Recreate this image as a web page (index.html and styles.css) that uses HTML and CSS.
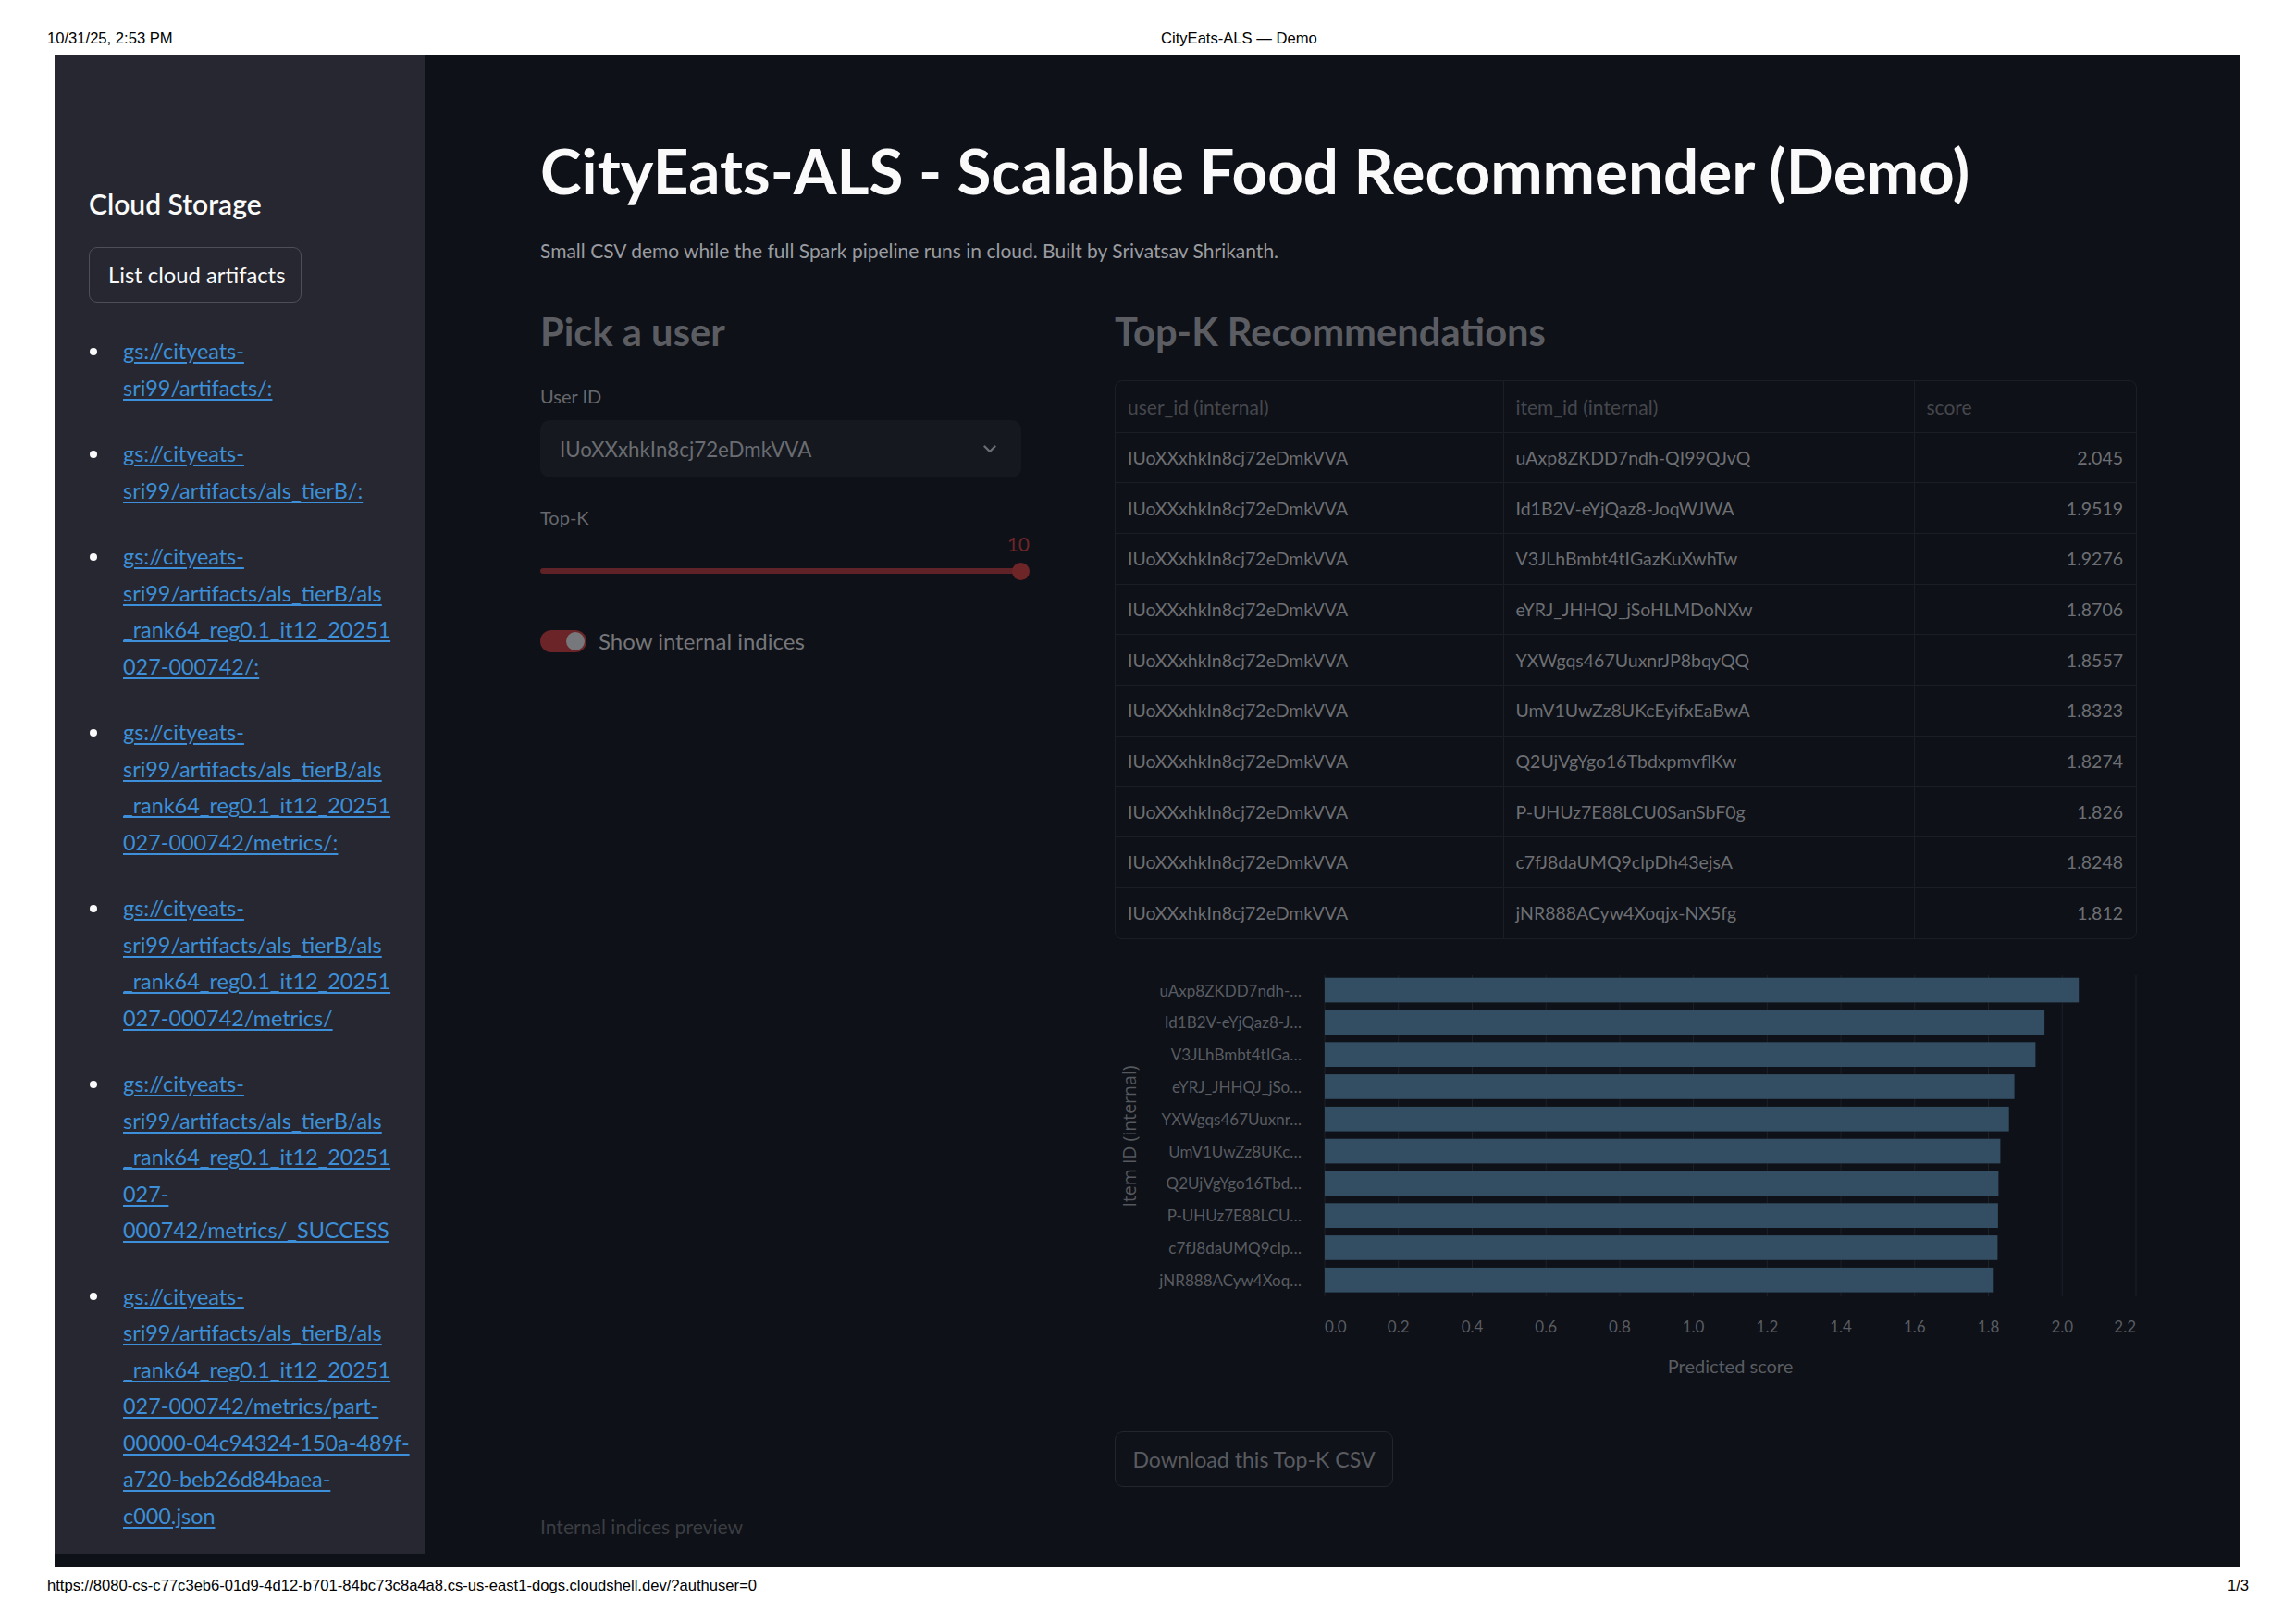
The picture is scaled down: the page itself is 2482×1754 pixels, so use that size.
FILE: index.html
```html
<!DOCTYPE html>
<html lang="en">
<head>
<meta charset="utf-8">
<title>CityEats-ALS — Demo</title>
<link rel="stylesheet" href="styles.css">
</head>
<body>
<header class="print-head">
  <span class="ph-date">10/31/25, 2:53 PM</span>
  <span class="ph-title">CityEats-ALS — Demo</span>
</header>

<div class="app">
  <aside class="sidebar">
    <h2 class="sb-title">Cloud Storage</h2>
    <button class="sb-button">List cloud artifacts</button>
    <ul class="sb-list">
      <li><a href="#">gs://cityeats-<br>sri99/artifacts/:</a></li>
      <li><a href="#">gs://cityeats-<br>sri99/artifacts/als_tierB/:</a></li>
      <li><a href="#">gs://cityeats-<br>sri99/artifacts/als_tierB/als<br>_rank64_reg0.1_it12_20251<br>027-000742/:</a></li>
      <li><a href="#">gs://cityeats-<br>sri99/artifacts/als_tierB/als<br>_rank64_reg0.1_it12_20251<br>027-000742/metrics/:</a></li>
      <li><a href="#">gs://cityeats-<br>sri99/artifacts/als_tierB/als<br>_rank64_reg0.1_it12_20251<br>027-000742/metrics/</a></li>
      <li><a href="#">gs://cityeats-<br>sri99/artifacts/als_tierB/als<br>_rank64_reg0.1_it12_20251<br>027-<br>000742/metrics/_SUCCESS</a></li>
      <li><a href="#">gs://cityeats-<br>sri99/artifacts/als_tierB/als<br>_rank64_reg0.1_it12_20251<br>027-000742/metrics/part-<br>00000-04c94324-150a-489f-<br>a720-beb26d84baea-<br>c000.json</a></li>
    </ul>
  </aside>

  <main class="main">
    <h1 class="title">CityEats-ALS - Scalable Food Recommender (Demo)</h1>
    <p class="caption">Small CSV demo while the full Spark pipeline runs in cloud. Built by Srivatsav Shrikanth.</p>

    <div class="columns">
      <section class="col-left">
        <h3 class="sec-title">Pick a user</h3>
        <label class="field-label label-user">User ID</label>
        <div class="select">
          <span class="select-value">IUoXXxhkIn8cj72eDmkVVA</span>
          <svg class="chevron" width="14" height="9" viewBox="0 0 14 9"><polyline points="1.5,1.5 7,7 12.5,1.5" fill="none" stroke="#6a6c71" stroke-width="2.4" stroke-linecap="round" stroke-linejoin="round"/></svg>
        </div>
        <label class="field-label label-topk">Top-K</label>
        <div class="slider">
          <div class="slider-value">10</div>
          <div class="slider-track"><span class="slider-thumb"></span></div>
        </div>
        <div class="toggle-row">
          <span class="toggle"><span class="toggle-knob"></span></span>
          <span class="toggle-label">Show internal indices</span>
        </div>
      </section>

      <section class="col-right">
        <h3 class="sec-title">Top-K Recommendations</h3>
        <div class="table-wrap">
          <table class="rec-table">
            <colgroup><col class="c1"><col class="c2"><col class="c3"></colgroup>
            <thead>
              <tr><th>user_id (internal)</th><th>item_id (internal)</th><th>score</th></tr>
            </thead>
            <tbody>
              <tr><td>IUoXXxhkIn8cj72eDmkVVA</td><td>uAxp8ZKDD7ndh-QI99QJvQ</td><td class="num">2.045</td></tr>
              <tr><td>IUoXXxhkIn8cj72eDmkVVA</td><td>Id1B2V-eYjQaz8-JoqWJWA</td><td class="num">1.9519</td></tr>
              <tr><td>IUoXXxhkIn8cj72eDmkVVA</td><td>V3JLhBmbt4tIGazKuXwhTw</td><td class="num">1.9276</td></tr>
              <tr><td>IUoXXxhkIn8cj72eDmkVVA</td><td>eYRJ_JHHQJ_jSoHLMDoNXw</td><td class="num">1.8706</td></tr>
              <tr><td>IUoXXxhkIn8cj72eDmkVVA</td><td>YXWgqs467UuxnrJP8bqyQQ</td><td class="num">1.8557</td></tr>
              <tr><td>IUoXXxhkIn8cj72eDmkVVA</td><td>UmV1UwZz8UKcEyifxEaBwA</td><td class="num">1.8323</td></tr>
              <tr><td>IUoXXxhkIn8cj72eDmkVVA</td><td>Q2UjVgYgo16TbdxpmvflKw</td><td class="num">1.8274</td></tr>
              <tr><td>IUoXXxhkIn8cj72eDmkVVA</td><td>P-UHUz7E88LCU0SanSbF0g</td><td class="num">1.826</td></tr>
              <tr><td>IUoXXxhkIn8cj72eDmkVVA</td><td>c7fJ8daUMQ9clpDh43ejsA</td><td class="num">1.8248</td></tr>
              <tr><td>IUoXXxhkIn8cj72eDmkVVA</td><td>jNR888ACyw4Xoqjx-NX5fg</td><td class="num">1.812</td></tr>
            </tbody>
          </table>
        </div>

        <svg class="chart" width="1105" height="460" viewBox="0 0 1105 460">
          <g class="grid">
            <line x1="227" y1="13" x2="227" y2="360"/>
            <line x1="306.7" y1="13" x2="306.7" y2="360"/>
            <line x1="386.5" y1="13" x2="386.5" y2="360"/>
            <line x1="466.2" y1="13" x2="466.2" y2="360"/>
            <line x1="545.9" y1="13" x2="545.9" y2="360"/>
            <line x1="625.6" y1="13" x2="625.6" y2="360"/>
            <line x1="705.4" y1="13" x2="705.4" y2="360"/>
            <line x1="785.1" y1="13" x2="785.1" y2="360"/>
            <line x1="864.8" y1="13" x2="864.8" y2="360"/>
            <line x1="944.5" y1="13" x2="944.5" y2="360"/>
            <line x1="1024.3" y1="13" x2="1024.3" y2="360"/>
            <line x1="1104" y1="13" x2="1104" y2="360"/>
          </g>
          <g class="bars">
            <rect x="227" y="15.7" width="815.2" height="26.7"/>
            <rect x="227" y="50.5" width="778.1" height="26.7"/>
            <rect x="227" y="85.3" width="768.4" height="26.7"/>
            <rect x="227" y="120.1" width="745.6" height="26.7"/>
            <rect x="227" y="154.9" width="739.7" height="26.7"/>
            <rect x="227" y="189.7" width="730.4" height="26.7"/>
            <rect x="227" y="224.5" width="728.4" height="26.7"/>
            <rect x="227" y="259.3" width="727.9" height="26.7"/>
            <rect x="227" y="294.1" width="727.4" height="26.7"/>
            <rect x="227" y="328.9" width="722.3" height="26.7"/>
          </g>
          <g class="ylabels">
            <text x="202" y="29">uAxp8ZKDD7ndh-…</text>
            <text x="202" y="63.8">Id1B2V-eYjQaz8-J…</text>
            <text x="202" y="98.6">V3JLhBmbt4tIGa…</text>
            <text x="202" y="133.4">eYRJ_JHHQJ_jSo…</text>
            <text x="202" y="168.2">YXWgqs467Uuxnr…</text>
            <text x="202" y="203">UmV1UwZz8UKc…</text>
            <text x="202" y="237.8">Q2UjVgYgo16Tbd…</text>
            <text x="202" y="272.6">P-UHUz7E88LCU…</text>
            <text x="202" y="307.4">c7fJ8daUMQ9clp…</text>
            <text x="202" y="342.2">jNR888ACyw4Xoq…</text>
          </g>
          <g class="xticks">
            <text x="227" y="392" class="first">0.0</text>
            <text x="306.7" y="392">0.2</text>
            <text x="386.5" y="392">0.4</text>
            <text x="466.2" y="392">0.6</text>
            <text x="545.9" y="392">0.8</text>
            <text x="625.6" y="392">1.0</text>
            <text x="705.4" y="392">1.2</text>
            <text x="785.1" y="392">1.4</text>
            <text x="864.8" y="392">1.6</text>
            <text x="944.5" y="392">1.8</text>
            <text x="1024.3" y="392">2.0</text>
            <text x="1104" y="392" class="last">2.2</text>
          </g>
          <text class="xtitle" x="665.5" y="443">Predicted score</text>
          <text class="ytitle" x="0" y="0" transform="translate(15 187) rotate(-90)">Item ID (internal)</text>
        </svg>

        <button class="dl-button">Download this Top-K CSV</button>
      </section>
    </div>

    <p class="preview-note">Internal indices preview</p>
  </main>
</div>

<footer class="print-foot">
  <span>https://8080-cs-c77c3eb6-01d9-4d12-b701-84bc73c8a4a8.cs-us-east1-dogs.cloudshell.dev/?authuser=0</span>
  <span>1/3</span>
</footer>
</body>
</html>
```

FILE: styles.css
```css
* { box-sizing: border-box; }

html, body {
  margin: 0;
  padding: 0;
  background: #ffffff;
}

body {
  width: 2482px;
  height: 1754px;
  overflow: hidden;
  font-family: "Lato", "Noto Sans", sans-serif;
}

/* print header / footer */
.print-head {
  height: 59px;
  padding: 33px 0 0 51px;
  display: grid;
  grid-template-columns: 1204px auto;
  font-family: "Liberation Sans", Arial, sans-serif;
  font-size: 16.6px;
  line-height: 18px;
  color: #000;
}

.print-foot {
  margin-top: 11px;
  padding: 0 51px;
  width: 2482px;
  display: flex;
  justify-content: space-between;
  font-family: "Liberation Sans", Arial, sans-serif;
  font-size: 16.6px;
  line-height: 18px;
  color: #000;
}

/* app frame */
.app {
  margin-left: 59px;
  width: 2363px;
  height: 1635px;
  background: #0e1117;
  display: flex;
  align-items: flex-start;
}

.sidebar {
  width: 400px;
  height: 1620px;
  flex: 0 0 400px;
  background: #262730;
  padding: 143px 37px 0 37px;
}

.sb-title {
  margin: 0;
  font-size: 30px;
  line-height: 1.2;
  font-weight: 600;
  color: #fafafa;
}

.sb-button {
  margin-top: 29px;
  width: 230px;
  height: 60px;
  padding: 0 0 0 20px;
  text-align: left;
  background: transparent;
  border: 1px solid #4d4e58;
  border-radius: 9px;
  color: #fafafa;
  font-family: "Lato", sans-serif;
  font-size: 23.8px;
}

.sb-list {
  list-style: none;
  margin: 33px 0 0 0;
  padding: 0;
}

.sb-list li {
  display: flex;
  margin-bottom: 32px;
  font-size: 23.4px;
  line-height: 39.5px;
  white-space: nowrap;
}

.sb-list li::before {
  content: "";
  flex: 0 0 8px;
  height: 8px;
  margin: 15.75px 28px 0 1px;
  border-radius: 50%;
  background: #fafafa;
}

.sb-list a {
  color: #3c8fd8;
  text-decoration: underline;
  text-underline-offset: 3px;
}

/* main */
.main {
  flex: 1;
  padding: 85px 0 0 125px;
}

.title {
  margin: 0;
  font-size: 67.4px;
  line-height: 1.2;
  font-weight: 700;
  color: #fafafa;
}

.caption {
  margin: 33px 0 0 0;
  font-size: 21px;
  line-height: 1.2;
  color: #9a9ca1;
}

.columns {
  margin-top: 50px;
  display: grid;
  grid-template-columns: 519px 1105px;
  column-gap: 102px;
  align-items: start;
}

.sec-title {
  margin: 0;
  font-size: 41.7px;
  line-height: 1.2;
  font-weight: 700;
  color: #5b5d62;
}

.field-label {
  display: block;
  font-size: 20px;
  line-height: 1.2;
  color: #67686d;
}

.label-user { margin-top: 33px; }
.label-topk { margin-top: 31px; }

.select {
  margin-top: 14px;
  height: 62px;
  width: 520px;
  background: #15181f;
  border-radius: 10px;
  padding: 0 27px 0 21px;
  display: flex;
  align-items: center;
  justify-content: space-between;
}

.select-value {
  font-size: 22.3px;
  color: #6a6c71;
}

.slider {
  margin-top: 4px;
}

.slider-value {
  text-align: right;
  margin-right: -10px;
  font-size: 21px;
  line-height: 1.2;
  color: #6e2528;
}

.slider-track {
  margin-top: 14px;
  height: 6px;
  border-radius: 3px;
  background: #5f2226;
  display: flex;
  justify-content: flex-end;
  align-items: center;
}

.slider-thumb {
  width: 19px;
  height: 19px;
  margin-right: -9.5px;
  border-radius: 50%;
  background: #6e2528;
}

.toggle-row {
  margin-top: 58px;
  display: flex;
  align-items: center;
  gap: 13px;
}

.toggle {
  width: 50px;
  height: 24px;
  border-radius: 12px;
  background: #6b2428;
  padding: 2px;
  display: flex;
  justify-content: flex-end;
  align-items: center;
}

.toggle-knob {
  width: 20px;
  height: 20px;
  border-radius: 50%;
  background: #77787c;
}

.toggle-label {
  font-size: 24px;
  color: #75767b;
}

/* table */
.table-wrap {
  margin-top: 28px;
  border: 1px solid #1b1e25;
  border-radius: 8px;
  overflow: hidden;
}

.rec-table {
  width: 100%;
  border-collapse: collapse;
  table-layout: fixed;
  font-size: 19.5px;
  color: #6d6f74;
}

.rec-table .c1 { width: 419px; }
.rec-table .c2 { width: 444px; }
.rec-table .c3 { width: auto; }

.rec-table th {
  height: 55px;
  padding: 0 13px;
  text-align: left;
  font-weight: 400;
  font-size: 21px;
  color: #45474d;
  border-bottom: 1px solid #1b1e25;
  border-right: 1px solid #1b1e25;
}

.rec-table td {
  height: 54.7px;
  padding: 0 13px;
  border-bottom: 1px solid #1b1e25;
  border-right: 1px solid #1b1e25;
  white-space: nowrap;
}

.rec-table tr > :last-child { border-right: none; }
.rec-table tbody tr:last-child td { border-bottom: none; }

.rec-table td.num {
  text-align: right;
  padding-right: 14px;
}

/* chart */
.chart {
  display: block;
  margin-top: 26px;
}

.chart .grid line {
  stroke: #1c2029;
  stroke-width: 1;
}

.chart .bars rect {
  fill: #334d63;
}

.chart .ylabels text {
  font-family: "Lato", sans-serif;
  font-size: 17px;
  fill: #595c62;
  text-anchor: end;
  dominant-baseline: central;
}

.chart .xticks text {
  font-family: "Lato", sans-serif;
  font-size: 17px;
  fill: #595c62;
  text-anchor: middle;
  dominant-baseline: central;
}

.chart .xticks text.first { text-anchor: start; }
.chart .xticks text.last { text-anchor: end; }

.chart .xtitle {
  font-family: "Lato", sans-serif;
  font-size: 20px;
  fill: #595c62;
  text-anchor: middle;
}

.chart .ytitle {
  font-family: "Open Sans", sans-serif;
  font-size: 19.5px;
  fill: #55585e;
  text-anchor: middle;
  dominant-baseline: central;
}

.dl-button {
  display: block;
  margin-top: 46px;
  width: 301px;
  height: 60px;
  padding: 0;
  background: #0f1218;
  border: 1px solid #23262d;
  border-radius: 9px;
  font-family: "Lato", sans-serif;
  font-size: 23.1px;
  color: #595b60;
}

.preview-note {
  margin: 30px 0 0 0;
  font-size: 21.1px;
  line-height: 1.2;
  color: #3b3d42;
}
```
